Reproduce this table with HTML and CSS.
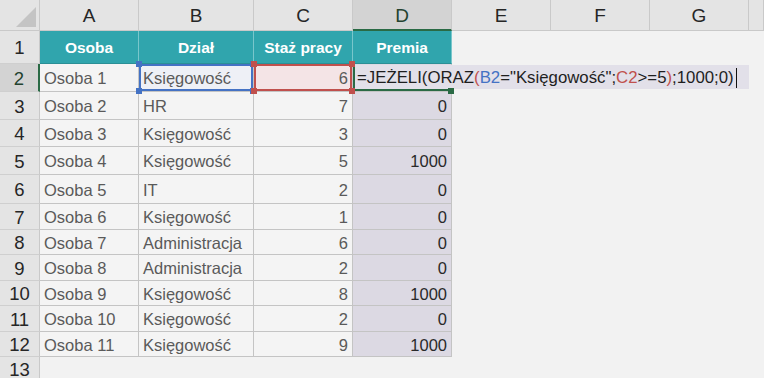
FILE: index.html
```html
<!DOCTYPE html>
<html lang="pl">
<head>
<meta charset="utf-8">
<title>Arkusz</title>
<link rel="stylesheet" href="styles.css">
</head>
<body>
<div class="sheet">
  <div class="corner"><div class="tri"></div></div>
  <div class="ch">A</div>
  <div class="ch">B</div>
  <div class="ch">C</div>
  <div class="ch ch-sel">D</div>
  <div class="ch">E</div>
  <div class="ch">F</div>
  <div class="ch">G</div>
  <div class="ch"></div>

  <div class="rh">1</div>
  <div class="c th">Osoba</div>
  <div class="c th">Dział</div>
  <div class="c th">Staż pracy</div>
  <div class="c th">Premia</div>
  <div class="rest"></div>

  <div class="rh rh-sel">2</div>
  <div class="c">Osoba 1</div>
  <div class="c sel-b">Księgowość<i class="h tl"></i><i class="h tr"></i><i class="h bl"></i><i class="h br"></i></div>
  <div class="c n sel-c">6<i class="h tl"></i><i class="h tr"></i><i class="h bl"></i><i class="h br"></i></div>
  <div class="c n p active">
    <div class="editor">=JEŻELI(ORAZ<span class="red">(</span><span class="blue">B2</span>="Księgowość";<span class="red">C2</span>&gt;=5<span class="red">)</span>;1000;0)<span class="caret"></span></div>
    <i class="fill"></i>
  </div>
  <div class="rest"></div>

  <div class="rh">3</div><div class="c">Osoba 2</div><div class="c">HR</div><div class="c n">7</div><div class="c n p">0</div><div class="rest"></div>
  <div class="rh">4</div><div class="c">Osoba 3</div><div class="c">Księgowość</div><div class="c n">3</div><div class="c n p">0</div><div class="rest"></div>
  <div class="rh">5</div><div class="c">Osoba 4</div><div class="c">Księgowość</div><div class="c n">5</div><div class="c n p">1000</div><div class="rest"></div>
  <div class="rh">6</div><div class="c">Osoba 5</div><div class="c">IT</div><div class="c n">2</div><div class="c n p">0</div><div class="rest"></div>
  <div class="rh">7</div><div class="c">Osoba 6</div><div class="c">Księgowość</div><div class="c n">1</div><div class="c n p">0</div><div class="rest"></div>
  <div class="rh">8</div><div class="c">Osoba 7</div><div class="c">Administracja</div><div class="c n">6</div><div class="c n p">0</div><div class="rest"></div>
  <div class="rh">9</div><div class="c">Osoba 8</div><div class="c">Administracja</div><div class="c n">2</div><div class="c n p">0</div><div class="rest"></div>
  <div class="rh">10</div><div class="c">Osoba 9</div><div class="c">Księgowość</div><div class="c n">8</div><div class="c n p">1000</div><div class="rest"></div>
  <div class="rh">11</div><div class="c">Osoba 10</div><div class="c">Księgowość</div><div class="c n">2</div><div class="c n p">0</div><div class="rest"></div>
  <div class="rh">12</div><div class="c">Osoba 11</div><div class="c">Księgowość</div><div class="c n">9</div><div class="c n p">1000</div><div class="rest"></div>
  <div class="rh last">13</div><div class="empty"></div>
</div>
</body>
</html>
```
FILE: styles.css
```css
* { box-sizing: border-box; }
html, body { margin: 0; padding: 0; }
body {
  width: 764px;
  height: 378px;
  overflow: hidden;
  background: #f2f2f2;
  font-family: "Liberation Sans", Arial, sans-serif;
}
.sheet {
  display: grid;
  grid-template-columns: 40px 99px 115px 99px 99px 99px 99px 99px 1fr;
  grid-template-rows: 31px 33px 28px 28px 27px 28px 29px 26px 25px 26px 25px 26px 25px 21px;
  height: 378px;
  background: #f2f2f2;
}
.corner {
  background: #e4e4e4;
  border-right: 1px solid #c9c9c9;
  border-bottom: 1px solid #c9c9c9;
  position: relative;
}
.tri {
  position: absolute;
  right: 3px;
  bottom: 3px;
  width: 0;
  height: 0;
  border-left: 20px solid transparent;
  border-bottom: 20px solid #c4c4c4;
}
.ch {
  background: #e4e4e4;
  border-right: 1px solid #c9c9c9;
  border-bottom: 1px solid #c9c9c9;
  display: flex;
  align-items: center;
  justify-content: center;
  font-size: 19px;
  color: #262626;
  padding-top: 2px;
}
.ch-sel {
  background: #d3d3d3;
  border-bottom: 2px solid #2a6a45;
  color: #24422f;
}
.rh {
  grid-column: 1;
  background: #e4e4e4;
  border-right: 1px solid #c9c9c9;
  border-bottom: 1px solid #cfcfcf;
  display: flex;
  align-items: center;
  justify-content: center;
  font-size: 18.5px;
  color: #262626;
  padding-top: 2px;
}
.rh.last { border-bottom: 0; padding-top: 4px; }
.rh-sel {
  background: #d3d3d3;
  border-right: 2px solid #2a6a45;
  color: #24422f;
}
.c {
  position: relative;
  background: #f4f4f4;
  border-right: 1px solid #c4c4c4;
  border-bottom: 1px solid #c4c4c4;
  display: flex;
  align-items: center;
  padding: 2px 4px 0 4px;
  font-size: 16.5px;
  color: #5a5a5a;
  white-space: nowrap;
}
.n { justify-content: flex-end; }
.p { background: #dcd9e3; color: #2a2a2a; }
.th {
  background: #30a5ad;
  color: #fff;
  font-weight: bold;
  font-size: 15.5px;
  justify-content: center;
  border-right: 1px solid #79c6cb;
  border-bottom: 1px solid #2b8f96;
}
.rest { grid-column: span 4; }
.empty { grid-column: span 8; }

.sel-b {
  box-shadow: inset 0 0 0 2px #4472c4;
  background: #eef0f6;
}
.sel-c {
  box-shadow: inset 0 0 0 2px #c0504d;
  background: #f4e4e6;
}
.h {
  position: absolute;
  width: 6px;
  height: 6px;
  z-index: 3;
}
.sel-b .h { background: #4472c4; }
.sel-c .h { background: #c0504d; }
.h.tl { left: -3px; top: -3px; }
.h.tr { right: -3px; top: -3px; }
.h.bl { left: -3px; bottom: -3px; }
.h.br { right: -3px; bottom: -3px; }

.active {
  box-shadow: inset 2px 0 0 #2a6a45, inset 0 -2px 0 #2a6a45;
}
.editor {
  position: absolute;
  left: 2px;
  top: 1px;
  bottom: 2px;
  width: 394px;
  background: #e2e0e9;
  color: #1e1e1e;
  font-size: 16.8px;
  display: flex;
  align-items: center;
  padding: 2px 0 0 2px;
  white-space: nowrap;
  z-index: 2;
}
.red { color: #c0504d; }
.blue { color: #4472c4; }
.caret {
  display: inline-block;
  width: 1px;
  height: 20px;
  background: #111;
  margin-left: 2px;
}
.fill {
  position: absolute;
  right: -3px;
  bottom: -3px;
  width: 6px;
  height: 6px;
  background: #2a6a45;
  z-index: 3;
}
```
